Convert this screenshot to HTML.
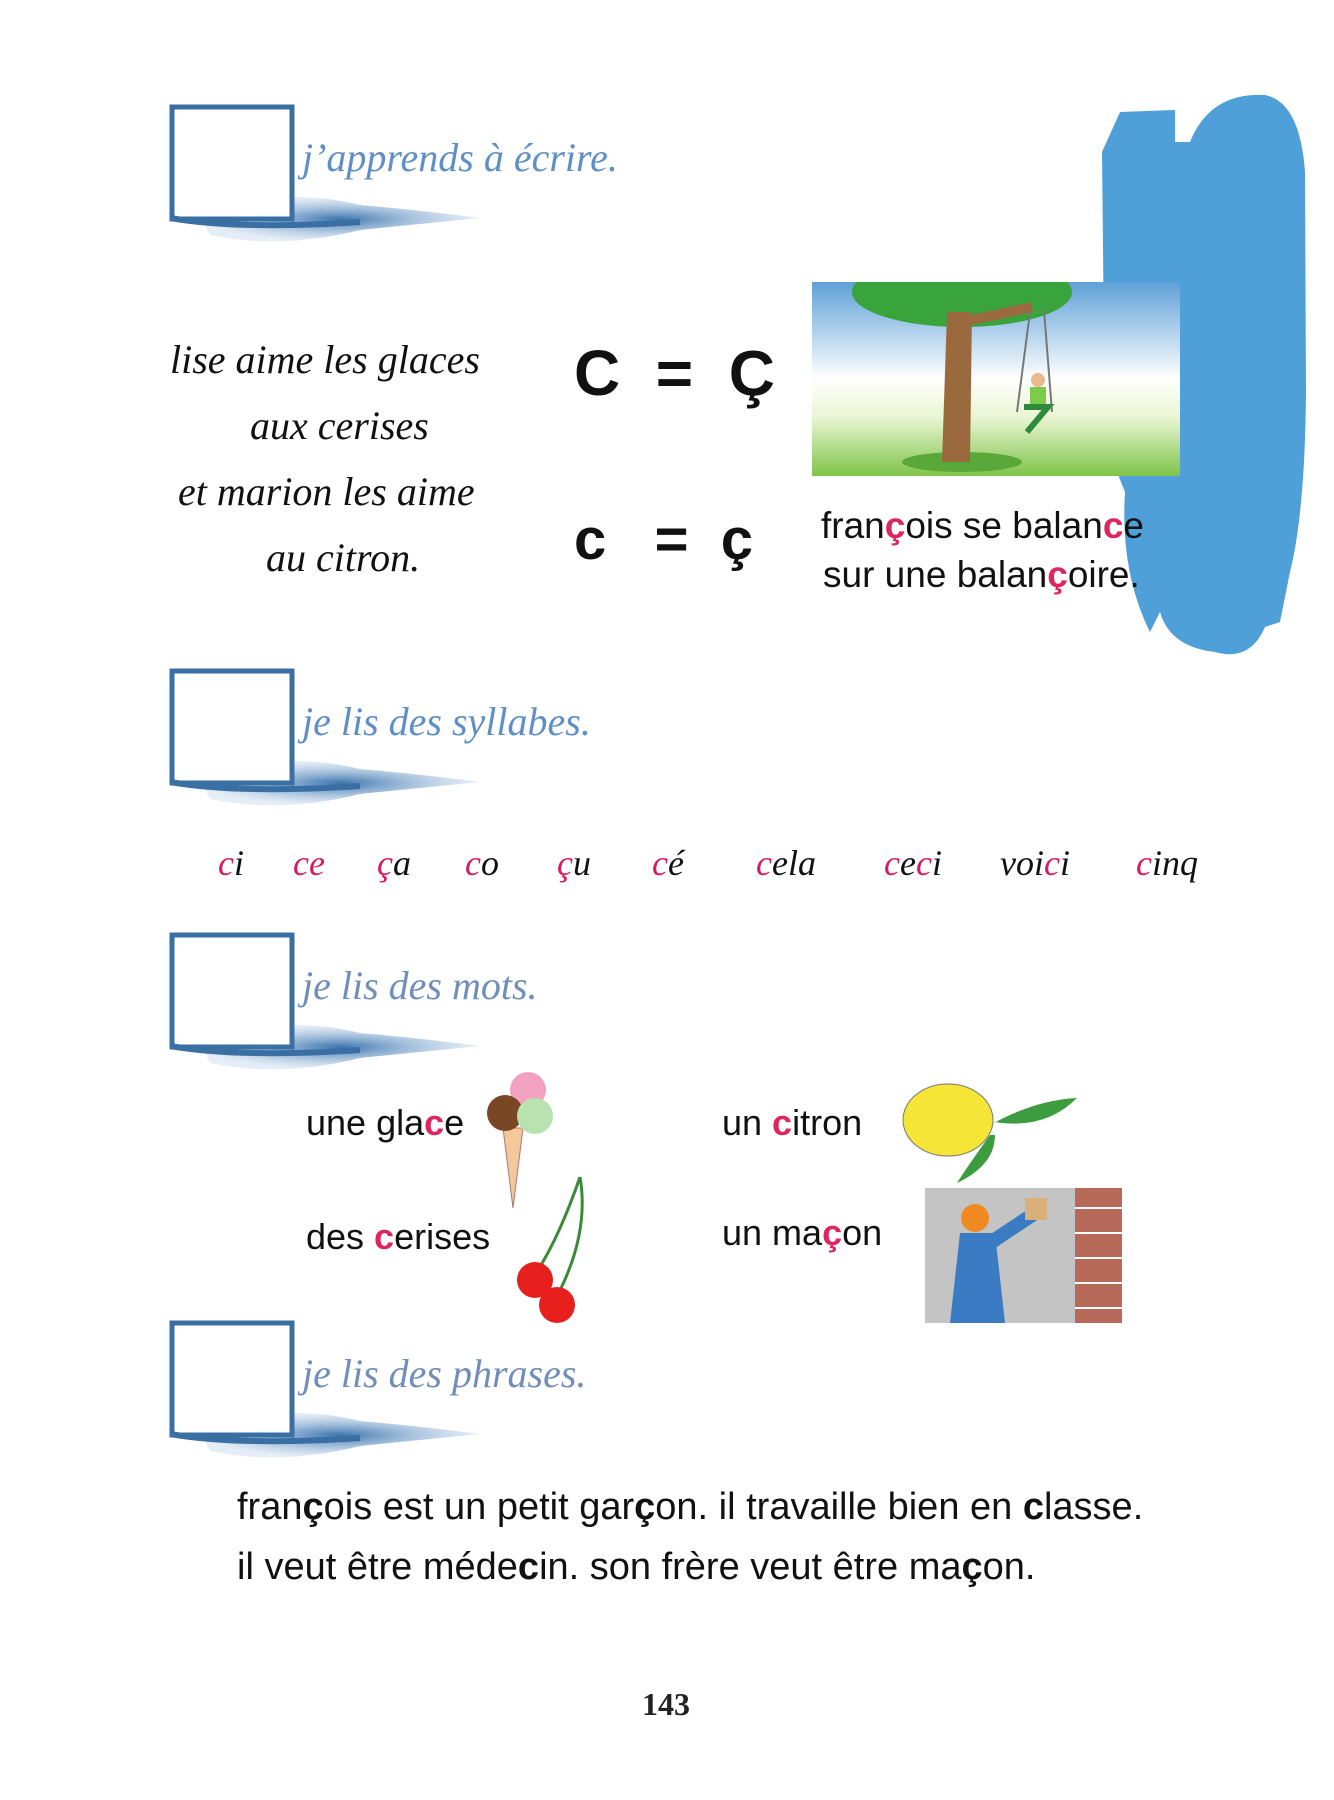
<!DOCTYPE html>
<html><head><meta charset="utf-8"><style>
body{margin:0;width:1334px;height:1800px;background:#fff;position:relative;overflow:hidden;font-family:"Liberation Sans",sans-serif;}
.a{position:absolute;white-space:nowrap;}
.hd{font-family:"Liberation Serif",serif;font-style:italic;color:#5e8fc6;font-size:40px;}
.cur{font-family:"Liberation Serif",serif;font-style:italic;color:#111;font-size:40px;}
.r{color:#e0245e;font-weight:bold;}
.syl{font-family:"Liberation Serif",serif;font-style:italic;font-size:36px;color:#111;}
.syl .p{color:#d81b60;}
.t{font-size:36px;color:#111;}
</style></head><body>

<svg class="a" style="left:160px;top:100px" width="340" height="160">
<defs><radialGradient id="g" cx="50%" cy="50%" r="50%"><stop offset="0" stop-color="#3b74ad"/><stop offset="1" stop-color="#a9c6e3" stop-opacity="0.3"/></radialGradient></defs>
<path d="M40 115 Q120 85 200 105 Q260 110 320 118 Q250 125 200 130 Q120 150 50 135 Z" fill="url(#g)"/>
<rect x="12" y="7" width="120" height="112" fill="#fff" stroke="#3a6fa3" stroke-width="5"/>
<path d="M10 118 Q80 130 200 122" stroke="#3a6fa3" stroke-width="6" fill="none"/>
</svg>
<div class="a hd" style="left:302px;top:134px">j’apprends à écrire.</div>

<svg class="a" style="left:160px;top:664px" width="340" height="160">
<path d="M40 115 Q120 85 200 105 Q260 110 320 118 Q250 125 200 130 Q120 150 50 135 Z" fill="url(#g)"/>
<rect x="12" y="7" width="120" height="112" fill="#fff" stroke="#3a6fa3" stroke-width="5"/>
<path d="M10 118 Q80 130 200 122" stroke="#3a6fa3" stroke-width="6" fill="none"/>
</svg>
<div class="a hd" style="left:302px;top:698px">je lis des syllabes.</div>

<svg class="a" style="left:160px;top:928px" width="340" height="160">
<path d="M40 115 Q120 85 200 105 Q260 110 320 118 Q250 125 200 130 Q120 150 50 135 Z" fill="url(#g)"/>
<rect x="12" y="7" width="120" height="112" fill="#fff" stroke="#3a6fa3" stroke-width="5"/>
<path d="M10 118 Q80 130 200 122" stroke="#3a6fa3" stroke-width="6" fill="none"/>
</svg>
<div class="a hd" style="left:302px;top:962px;color:#6f8fb8">je lis des mots.</div>

<svg class="a" style="left:160px;top:1316px" width="340" height="160">
<path d="M40 115 Q120 85 200 105 Q260 110 320 118 Q250 125 200 130 Q120 150 50 135 Z" fill="url(#g)"/>
<rect x="12" y="7" width="120" height="112" fill="#fff" stroke="#3a6fa3" stroke-width="5"/>
<path d="M10 118 Q80 130 200 122" stroke="#3a6fa3" stroke-width="6" fill="none"/>
</svg>
<div class="a hd" style="left:302px;top:1350px;color:#6f8fb8">je lis des phrases.</div>

<svg class="a" style="left:1100px;top:92px" width="210" height="570">
<path d="M20 20 L75 18 L75 50 L90 50 Q110 0 165 3 Q200 10 205 80 L206 300 Q205 420 190 480 L180 530 L165 535 Q150 570 115 560 Q70 555 60 520 L50 540 Q20 480 25 400 L5 350 L2 60 Z" fill="#4f9fd8"/>
</svg>

<svg class="a" style="left:812px;top:282px" width="368" height="194">
<defs><linearGradient id="sky" x1="0" y1="0" x2="0" y2="1"><stop offset="0" stop-color="#5fa1d8"/><stop offset="0.5" stop-color="#ffffff"/><stop offset="0.7" stop-color="#e9f5d2"/><stop offset="1" stop-color="#7fc449"/></linearGradient></defs>
<rect width="368" height="194" fill="url(#sky)"/>
<ellipse cx="150" cy="10" rx="110" ry="35" fill="#3aa43c"/>
<ellipse cx="150" cy="180" rx="60" ry="10" fill="#5aa83a"/>
<path d="M135 30 L160 30 L158 180 L130 180 Z" fill="#9a6a3e"/>
<path d="M150 40 L220 25" stroke="#9a6a3e" stroke-width="10"/>
<line x1="218" y1="30" x2="205" y2="130" stroke="#777" stroke-width="2"/>
<line x1="232" y1="28" x2="240" y2="130" stroke="#777" stroke-width="2"/>
<circle cx="226" cy="98" r="7" fill="#e9b88f"/>
<rect x="218" y="105" width="16" height="20" fill="#7ccb4a"/>
<path d="M212 125 L236 125 L215 150" stroke="#2f8a3a" stroke-width="6" fill="none"/>
</svg>

<div class="a cur" style="left:170px;top:336px">lise aime les glaces</div>
<div class="a cur" style="left:250px;top:402px">aux cerises</div>
<div class="a cur" style="left:178px;top:468px">et marion les aime</div>
<div class="a cur" style="left:266px;top:534px">au citron.</div>

<div class="a" style="left:574px;top:336px;font-size:64px;font-weight:bold;color:#111">C&nbsp;&nbsp;=&nbsp;&nbsp;Ç</div>
<div class="a" style="left:574px;top:506px;font-size:58px;font-weight:bold;color:#111">c&nbsp;&nbsp;&nbsp;=&nbsp;&nbsp;ç</div>

<div class="a t" style="left:821px;top:505px;font-size:37px">fran<span class="r">ç</span>ois se balan<span class="r">c</span>e</div>
<div class="a t" style="left:823px;top:554px;font-size:37px">sur une balan<span class="r">ç</span>oire.</div>

<div class="a syl" style="left:218px;top:842px"><span class="p">c</span>i</div>
<div class="a syl" style="left:293px;top:842px"><span class="p">ce</span></div>
<div class="a syl" style="left:377px;top:842px"><span class="p">ç</span>a</div>
<div class="a syl" style="left:465px;top:842px"><span class="p">c</span>o</div>
<div class="a syl" style="left:557px;top:842px"><span class="p">ç</span>u</div>
<div class="a syl" style="left:652px;top:842px"><span class="p">c</span>é</div>
<div class="a syl" style="left:756px;top:842px"><span class="p">c</span>ela</div>
<div class="a syl" style="left:884px;top:842px"><span class="p">c</span>e<span class="p">c</span>i</div>
<div class="a syl" style="left:1000px;top:842px">voi<span class="p">c</span>i</div>
<div class="a syl" style="left:1136px;top:842px"><span class="p">c</span>inq</div>

<div class="a t" style="left:306px;top:1102px">une gla<span class="r">c</span>e</div>
<div class="a t" style="left:722px;top:1102px">un <span class="r">c</span>itron</div>
<div class="a t" style="left:306px;top:1216px">des <span class="r">c</span>erises</div>
<div class="a t" style="left:722px;top:1212px">un ma<span class="r">ç</span>on</div>

<svg class="a" style="left:483px;top:1068px" width="75" height="150">
<path d="M20 60 L30 140 L40 60 Z" fill="#f3c89a" stroke="#a77" />
<circle cx="45" cy="22" r="18" fill="#f2a1c0"/>
<circle cx="22" cy="45" r="18" fill="#7a4726"/>
<circle cx="52" cy="48" r="18" fill="#b8e2b0"/>
</svg>
<svg class="a" style="left:510px;top:1175px" width="85" height="150">
<path d="M70 2 Q80 60 45 125 M70 2 Q50 60 28 95" stroke="#3a8a3a" stroke-width="3" fill="none"/>
<circle cx="25" cy="105" r="18" fill="#e8201d"/>
<circle cx="47" cy="130" r="18" fill="#e8201d"/>
</svg>
<svg class="a" style="left:895px;top:1080px" width="185" height="110">
<ellipse cx="53" cy="40" rx="45" ry="36" fill="#f5e536" stroke="#777"/>
<path d="M95 45 Q140 20 182 18 Q150 50 100 42 Z" fill="#3d9c3d"/>
<path d="M95 55 Q70 90 62 103 Q100 85 100 55 Z" fill="#3d9c3d"/>
</svg>
<svg class="a" style="left:925px;top:1188px" width="197" height="135">
<rect width="197" height="135" fill="#c4c4c4"/>
<rect x="150" y="0" width="47" height="135" fill="#b86a5a"/>
<g stroke="#fff" stroke-width="2"><line x1="150" y1="20" x2="197" y2="20"/><line x1="150" y1="45" x2="197" y2="45"/><line x1="150" y1="70" x2="197" y2="70"/><line x1="150" y1="95" x2="197" y2="95"/><line x1="150" y1="120" x2="197" y2="120"/></g>
<path d="M35 45 L70 45 L80 135 L25 135 Z" fill="#3a7bc4"/>
<path d="M65 55 L110 25" stroke="#3a7bc4" stroke-width="14"/>
<circle cx="50" cy="30" r="14" fill="#f08a20"/>
<rect x="100" y="10" width="22" height="22" fill="#d9b07a"/>
</svg>

<div class="a t" style="left:237px;top:1486px;font-size:38px">fran<b>ç</b>ois est un petit gar<b>ç</b>on. il travaille bien en <b>c</b>lasse.</div>
<div class="a t" style="left:237px;top:1546px;font-size:38px">il veut être méde<b>c</b>in. son frère veut être ma<b>ç</b>on.</div>

<div class="a" style="left:642px;top:1686px;font-family:'Liberation Serif',serif;font-weight:bold;font-size:32px;color:#222">143</div>
</body></html>
